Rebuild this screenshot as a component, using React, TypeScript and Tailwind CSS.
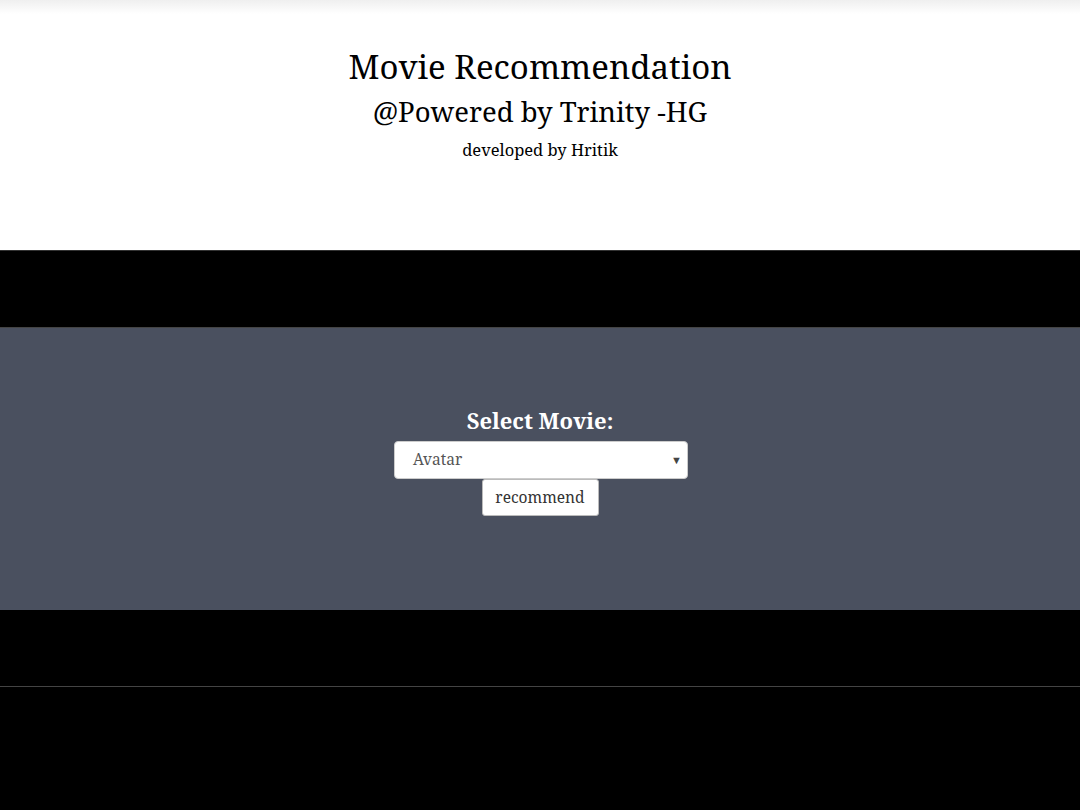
export default function App() {
  return (
    <div className="min-h-[810px] bg-black font-['Noto_Serif',serif]">
      <header className="h-[250px] bg-white bg-gradient-to-b from-[#efefef] to-white to-[14px] text-center text-black">
        <div className="pt-[44px]">
          <h1 className="text-[33px] leading-[46px]">Movie Recommendation</h1>
          <h2 className="text-[27.5px] leading-[42px] mt-[1px]">@Powered by Trinity -HG</h2>
          <p className="text-[16.5px] leading-[30px] mt-[2px]">developed by Hritik</p>
        </div>
      </header>
      <div className="h-[77px] bg-black border-t border-[#333]"></div>
      <section className="h-[283px] bg-[#4a505f] border-t border-[#444] flex flex-col items-center pt-[76px]">
        <label className="text-white font-bold text-[22px] leading-[32px]">Select Movie:</label>
        <div className="relative mt-[5px] ml-[2px] w-[294px] h-[38px] bg-white rounded-[4px] border border-[#ccc] flex items-center">
          <span className="pl-[18px] text-[15.5px] text-[#555]">Avatar</span>
          <span className="absolute right-[5px] top-[10px] text-[11px] text-[#444]">▼</span>
        </div>
        <button className="w-[117px] h-[37px] bg-white rounded-[3px] border border-[#bbb] text-[15.5px] text-[#333]">
          recommend
        </button>
      </section>
      <div className="h-[77px] bg-black border-b border-[#444]"></div>
    </div>
  );
}
